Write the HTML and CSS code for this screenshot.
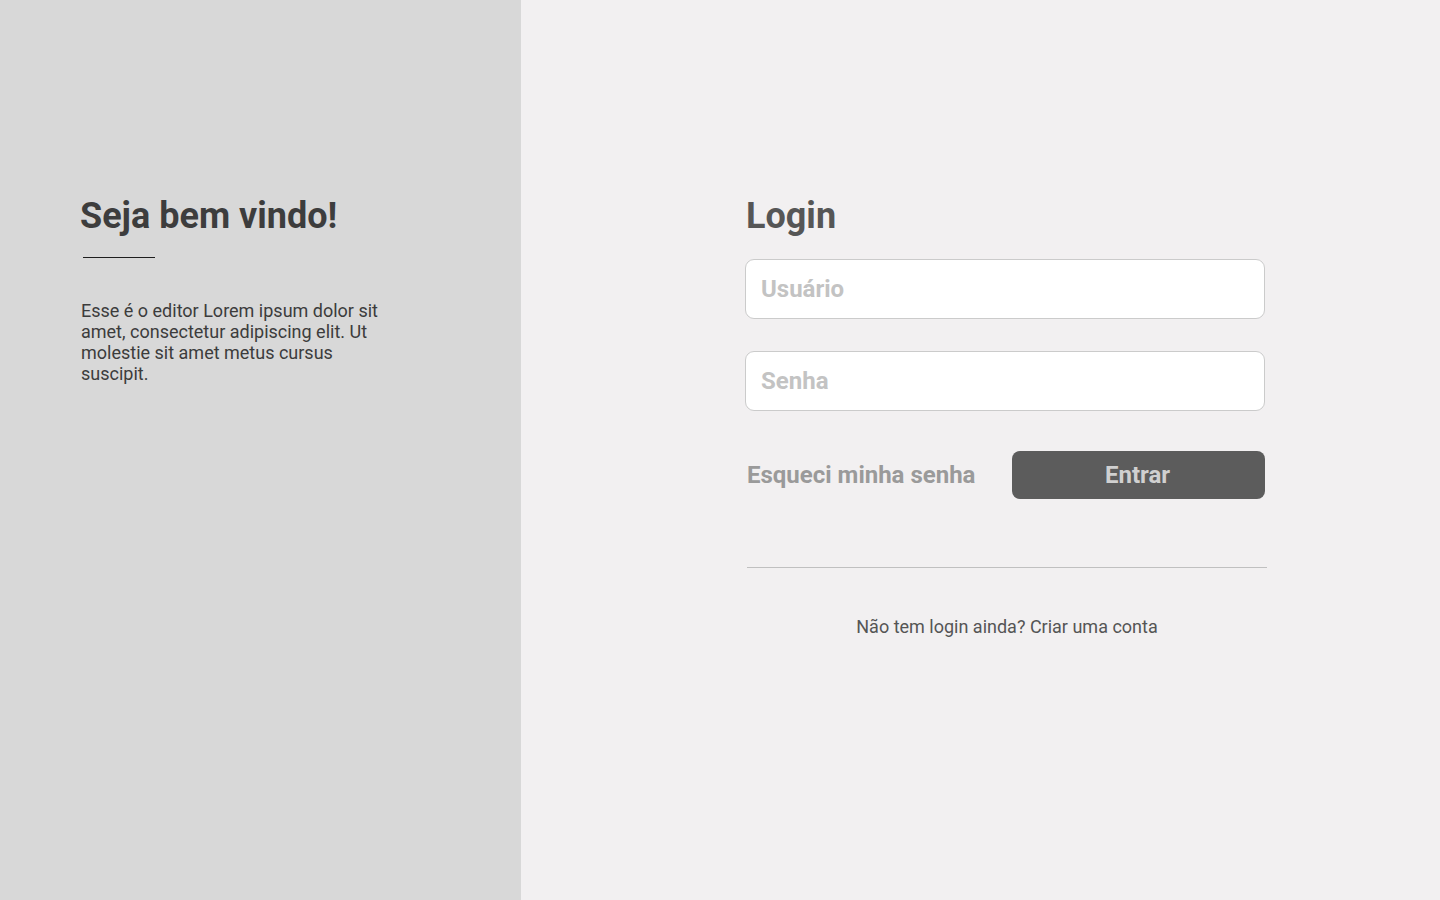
FILE: index.html
```html
<!DOCTYPE html>
<html lang="pt-BR">
<head>
<meta charset="utf-8">
<title>Login</title>
<link rel="stylesheet" href="styles.css">
</head>
<body>
<div class="page">
  <aside class="welcome">
    <h1 class="welcome-title">Seja bem vindo!</h1>
    <div class="welcome-rule"></div>
    <p class="welcome-text">Esse é o editor Lorem ipsum dolor sit amet, consectetur adipiscing elit. Ut molestie sit amet metus cursus suscipit.</p>
  </aside>
  <main class="login">
    <form class="login-form">
      <h1 class="login-title">Login</h1>
      <input class="field" type="text" placeholder="Usuário">
      <input class="field field-gap" type="password" placeholder="Senha">
      <div class="actions">
        <a class="forgot" href="#">Esqueci minha senha</a>
        <button class="submit" type="button">Entrar</button>
      </div>
      <div class="divider"></div>
      <p class="signup">Não tem login ainda? Criar uma conta</p>
    </form>
  </main>
</div>
</body>
</html>
```

FILE: styles.css
```css
* { box-sizing: border-box; }

html, body {
  margin: 0;
  padding: 0;
  height: 100%;
}

body {
  font-family: Roboto, "Liberation Sans", Arial, sans-serif;
  background: #f2f0f1;
}

.page {
  display: flex;
  min-height: 900px;
}

.welcome {
  width: 521px;
  flex: 0 0 521px;
  background: #d8d8d8;
  padding: 195px 0 0 80px;
}

.welcome-title {
  margin: 0;
  font-size: 36px;
  line-height: 42px;
  font-weight: 700;
  color: #3d3d3d;
}

.welcome-rule {
  width: 72px;
  height: 1px;
  background: #1e1e1e;
  margin: 20px 0 0 3px;
}

.welcome-text {
  width: 312px;
  margin: 42px 0 0 1px;
  font-size: 18px;
  line-height: 21px;
  color: #3c3c3c;
}

.login {
  flex: 1;
  padding: 195px 0 0 224px;
}

.login-form {
  width: 522px;
  display: flex;
  flex-direction: column;
}

.login-title {
  margin: 0 0 22px 1px;
  font-size: 36px;
  line-height: 42px;
  font-weight: 700;
  color: #565656;
}

.field {
  width: 520px;
  height: 60px;
  border: 1px solid #cbcbcb;
  border-radius: 9px;
  background: #ffffff;
  padding: 0 15px;
  font-family: inherit;
  font-size: 24px;
  font-weight: 700;
  color: #444;
  outline: none;
}

.field::placeholder {
  color: #c3c3c3;
  opacity: 1;
}

.field-gap {
  margin-top: 32px;
}

.actions {
  width: 520px;
  margin-top: 40px;
  display: flex;
  justify-content: space-between;
  align-items: center;
}

.forgot {
  margin-left: 2px;
  font-size: 24px;
  font-weight: 700;
  color: #9a9a9a;
  text-decoration: none;
}

.submit {
  width: 253px;
  height: 48px;
  border: none;
  border-radius: 8px;
  background: #5c5c5c;
  color: #d0d0d0;
  font-family: inherit;
  font-size: 24px;
  font-weight: 700;
  padding: 0 2px 0 0;
  cursor: pointer;
}

.divider {
  width: 520px;
  height: 1px;
  margin: 68px 0 0 2px;
  background: #c0c0c0;
}

.signup {
  margin: 49px 0 0 2px;
  width: 520px;
  text-align: center;
  font-size: 18px;
  line-height: 20px;
  color: #555555;
}
```
